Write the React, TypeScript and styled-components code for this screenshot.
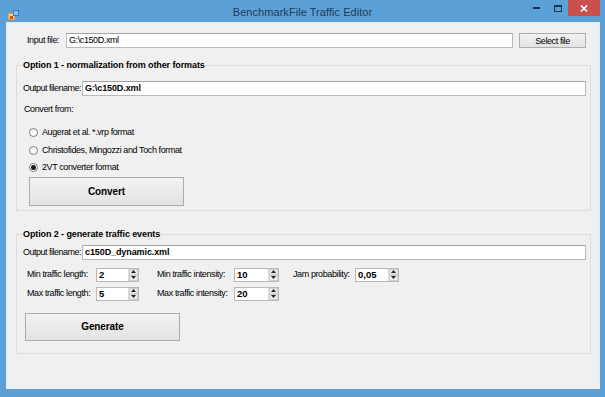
import React from 'react'
import styled, { createGlobalStyle } from 'styled-components'

const GlobalStyle = createGlobalStyle`
  html, body {
    margin: 0;
    padding: 0;
    background: #5ba1d8;
  }
  body {
    font-family: "Liberation Sans", Arial, sans-serif;
    color: #000;
  }
  * { box-sizing: border-box; }
`

const Window = styled.div`
  width: 605px;
  height: 397px;
  background: #5ba1d8;
  display: flex;
  flex-direction: column;
  overflow: hidden;
`

const TitleBar = styled.div`
  height: 22px;
  flex-shrink: 0;
  display: grid;
  grid-template-columns: 1fr auto 1fr;
  align-items: start;
`

const AppIcon = styled.div`
  padding: 6px 0 0 8px;
  height: 22px;
`

const Title = styled.div`
  font-size: 11px;
  line-height: 13px;
  padding-top: 6px;
  color: #1f3a57;
  letter-spacing: 0.05px;
`

const Captions = styled.div`
  justify-self: end;
  display: flex;
  margin-right: 5px;
`

const CaptionButton = styled.div<{ $close?: boolean }>`
  width: ${(p) => (p.$close ? '32px' : '21px')};
  height: 16px;
  display: flex;
  align-items: center;
  justify-content: center;
  background: ${(p) => (p.$close ? '#c9504c' : 'transparent')};
`

const Client = styled.div`
  flex: 1;
  margin: 0 5px 8px 6px;
  background: #f0f0f0;
  border: 1px solid #e4ecf3;
  padding-top: 10px;
  display: flex;
  flex-direction: column;
`

const Row = styled.div<{ $indent?: number; $top?: number }>`
  display: flex;
  align-items: center;
  padding-left: ${(p) => p.$indent ?? 0}px;
  margin-top: ${(p) => p.$top ?? 0}px;
`

const Label = styled.span<{ $w?: number }>`
  font-size: 9px;
  line-height: 11px;
  letter-spacing: -0.4px;
  white-space: nowrap;
  flex-shrink: 0;
  width: ${(p) => (p.$w ? `${p.$w}px` : 'auto')};
`

const FieldLabel = styled(Label)`
  letter-spacing: -0.5px;
  margin-right: 1px;
`

const TextBox = styled.div<{ $bold?: boolean; $w?: number }>`
  height: 15px;
  background: #fff;
  border: 1px solid #b9b9b9;
  border-top-color: #a3a3a3;
  font-size: 9px;
  font-weight: ${(p) => (p.$bold ? 700 : 400)};
  letter-spacing: ${(p) => (p.$bold ? '-0.1px' : '-0.4px')};
  line-height: 13px;
  padding-left: 2px;
  white-space: nowrap;
  ${(p) => (p.$w ? `width: ${p.$w}px; flex-shrink: 0;` : 'flex: 1;')}
`

const Button = styled.div<{ $w: number; $h: number; $bold?: boolean }>`
  width: ${(p) => p.$w}px;
  height: ${(p) => p.$h}px;
  flex-shrink: 0;
  border: 1px solid #adadad;
  background: linear-gradient(#f2f2f2, #e3e3e3);
  display: flex;
  align-items: center;
  justify-content: center;
  font-size: ${(p) => (p.$bold ? '10px' : '9px')};
  font-weight: ${(p) => (p.$bold ? 700 : 400)};
  letter-spacing: ${(p) => (p.$bold ? '-0.1px' : '-0.4px')};
`

const Group = styled.fieldset<{ $top: number }>`
  margin: ${(p) => p.$top}px 8px 0 9px;
  border: 1px solid #dcdcdc;
  padding: 0 4px 0 6px;
  min-inline-size: 0;
`

const Legend = styled.legend`
  padding: 0;
  font-size: 9px;
  font-weight: 700;
  line-height: 11px;
  letter-spacing: -0.1px;
`

const RadioList = styled.div`
  margin-top: 9px;
  padding-left: 6px;
  display: flex;
  flex-direction: column;
`

const RadioRow = styled.div`
  height: 17.5px;
  display: flex;
  align-items: center;
  gap: 4px;
`

const RadioCircle = styled.span<{ $checked?: boolean }>`
  width: 9px;
  height: 9px;
  border-radius: 50%;
  border: 1px solid #7a7a7a;
  background: #fff;
  display: flex;
  align-items: center;
  justify-content: center;
  &::after {
    content: '';
    width: 5px;
    height: 5px;
    border-radius: 50%;
    background: ${(p) => (p.$checked ? '#1a1a1a' : 'transparent')};
  }
`

const SpinGrid = styled.div`
  margin-top: 8px;
  padding-left: 4px;
  display: grid;
  grid-template-columns: 130px 136px auto;
  row-gap: 5px;
`

const Field = styled.div`
  display: flex;
  align-items: center;
  height: 14px;
`

const SpinBox = styled.div<{ $w: number }>`
  width: ${(p) => p.$w}px;
  height: 14px;
  background: #fff;
  border: 1px solid #b9b9b9;
  display: flex;
`

const SpinValue = styled.span`
  flex: 1;
  font-size: 9.5px;
  font-weight: 700;
  line-height: 12px;
  padding-left: 2px;
`

const SpinButtons = styled.div`
  width: 10px;
  display: flex;
  flex-direction: column;
  border-left: 1px solid #dcdcdc;
`

const SpinArrow = styled.div`
  flex: 1;
  background: #ececec;
  border: 1px solid #cfcfcf;
  display: flex;
  align-items: center;
  justify-content: center;
`

const Up = () => (
  <svg width="5" height="3" viewBox="0 0 5 3"><path d="M2.5 0 5 3H0z" fill="#222" /></svg>
)
const Down = () => (
  <svg width="5" height="3" viewBox="0 0 5 3"><path d="M0 0h5L2.5 3z" fill="#222" /></svg>
)

const Spinner = ({ label, labelW, w, value }: { label: string; labelW: number; w: number; value: string }) => (
  <Field>
    <Label $w={labelW}>{label}</Label>
    <SpinBox $w={w}>
      <SpinValue>{value}</SpinValue>
      <SpinButtons>
        <SpinArrow><Up /></SpinArrow>
        <SpinArrow><Down /></SpinArrow>
      </SpinButtons>
    </SpinBox>
  </Field>
)

const WinIcon = () => (
  <svg width="11" height="10" viewBox="0 0 11 10">
    <rect x="0" y="3" width="7" height="7" fill="#e9a23b" />
    <rect x="1" y="4" width="5" height="5" fill="#f7d36a" />
    <rect x="5" y="0" width="6" height="6" fill="#3a78c8" />
    <rect x="6" y="1" width="4" height="4" fill="#8cc0f0" />
    <rect x="2" y="6" width="3" height="3" fill="#d0463c" />
  </svg>
)

export default function App() {
  return (
    <Window>
      <GlobalStyle />
      <TitleBar>
        <AppIcon><WinIcon /></AppIcon>
        <Title>BenchmarkFile Traffic Editor</Title>
        <Captions>
          <CaptionButton>
            <svg width="7" height="2"><rect width="7" height="2" fill="#1c3350" /></svg>
          </CaptionButton>
          <CaptionButton>
            <svg width="8" height="7"><rect x="0.5" y="0.5" width="7" height="6" fill="none" stroke="#1c3350" /><rect width="8" height="2" fill="#1c3350" /></svg>
          </CaptionButton>
          <CaptionButton $close>
            <svg width="8" height="7" viewBox="0 0 8 7"><path d="M1 0.5 7 6.5M7 0.5 1 6.5" stroke="#fff" strokeWidth="1.6" /></svg>
          </CaptionButton>
        </Captions>
      </TitleBar>
      <Client>
        <Row $indent={20}>
          <Label $w={39}>Input file:</Label>
          <TextBox $w={447}>G:\c150D.xml</TextBox>
          <Button $w={67} $h={15} style={{ marginLeft: 6 }}>Select file</Button>
        </Row>

        <Group $top={12}>
          <Legend>Option 1 - normalization from other formats</Legend>
          <Row $top={10}>
            <FieldLabel>Output filename:</FieldLabel>
            <TextBox $bold>G:\c150D.xml</TextBox>
          </Row>
          <Row $top={8} $indent={1}>
            <Label>Convert from:</Label>
          </Row>
          <RadioList>
            <RadioRow><RadioCircle /><Label>Augerat et al. *.vrp format</Label></RadioRow>
            <RadioRow><RadioCircle /><Label>Christofides, Mingozzi and Toch format</Label></RadioRow>
            <RadioRow><RadioCircle $checked /><Label>2VT converter format</Label></RadioRow>
          </RadioList>
          <Row $indent={6} style={{ paddingBottom: 4 }}>
            <Button $w={155} $h={29} $bold>Convert</Button>
          </Row>
        </Group>

        <Group $top={18}>
          <Legend>Option 2 - generate traffic events</Legend>
          <Row $top={5}>
            <FieldLabel>Output filename:</FieldLabel>
            <TextBox $bold>c150D_dynamic.xml</TextBox>
          </Row>
          <SpinGrid>
            <Spinner label="Min traffic length:" labelW={69} w={43} value="2" />
            <Spinner label="Min traffic intensity:" labelW={77} w={45} value="10" />
            <Spinner label="Jam probability:" labelW={62} w={44} value="0,05" />
            <Spinner label="Max traffic length:" labelW={69} w={43} value="5" />
            <Spinner label="Max traffic intensity:" labelW={77} w={45} value="20" />
          </SpinGrid>
          <Row $top={12} $indent={2} style={{ paddingBottom: 12 }}>
            <Button $w={155} $h={28} $bold>Generate</Button>
          </Row>
        </Group>
      </Client>
    </Window>
  )
}
